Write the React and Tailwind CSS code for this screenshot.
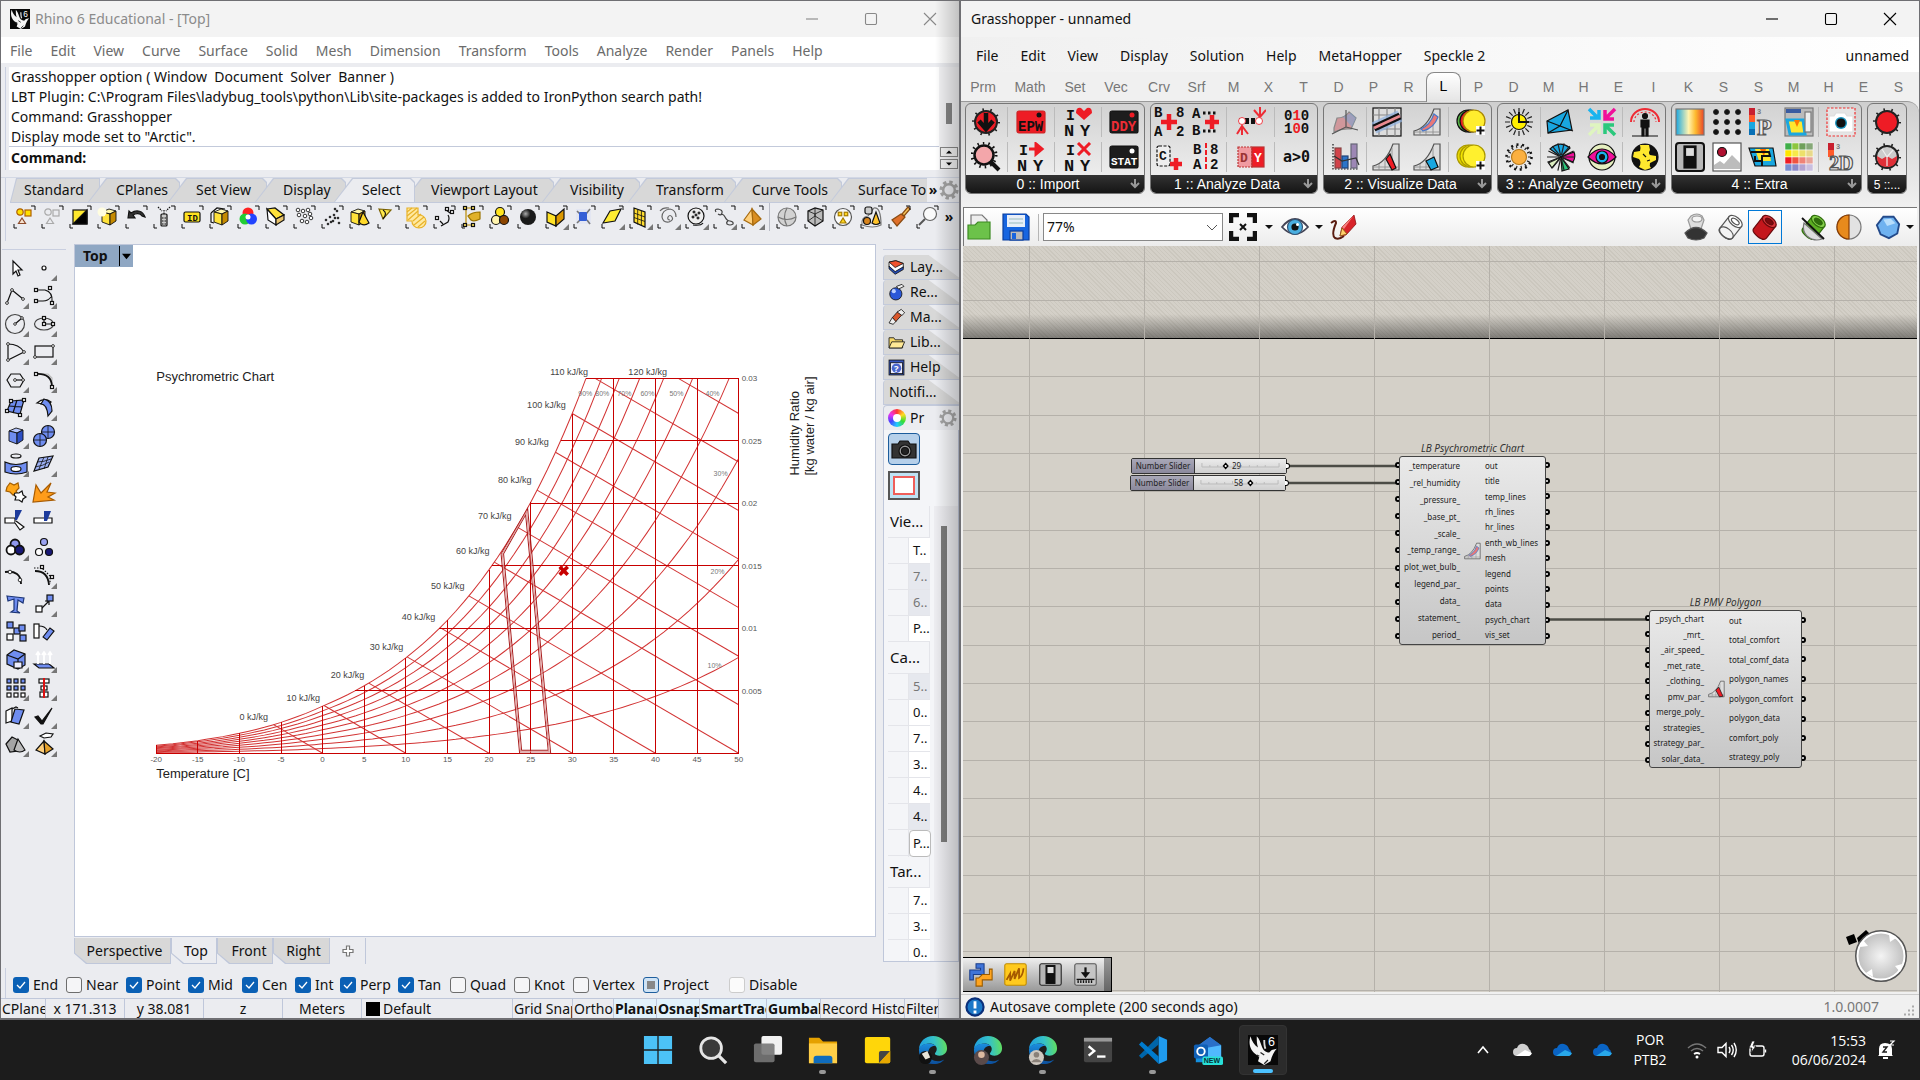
import React from "react";

/* ---------- shared helpers ---------- */

const Svg = ({ size = "size-7", box = "0 0 28 28", children }) => (
  <svg viewBox={box} className={`${size} block shrink-0`} fill="none" stroke="#111" strokeWidth="1.2" aria-hidden="true">
    {children}
  </svg>
);

const WindowButtons = ({ color }) => (
  <div className={`flex items-center ${color}`}>
    {[
      ["Minimize", "M1 7h12"],
      ["Maximize", "M1.5 3a1.5 1.5 0 0 1 1.5-1.5h8a1.5 1.5 0 0 1 1.5 1.5v8a1.5 1.5 0 0 1-1.5 1.5h-8a1.5 1.5 0 0 1-1.5-1.5z"],
      ["Close", "M1 1l12 12M13 1L1 13"],
    ].map(([label, d]) => (
      <button key={label} aria-label={label} className="flex h-9 w-[59px] items-center justify-center">
        <svg viewBox="0 0 14 14" className="size-3.5" fill="none" stroke="currentColor" strokeWidth="1.1">
          <path d={d} />
        </svg>
      </button>
    ))}
  </div>
);

const RhinoLogo = ({ size }) => (
  <svg viewBox="0 0 24 24" className={`${size} block`} aria-hidden="true">
    <rect width="24" height="24" fill="#080808" />
    <path d="M2 1C0 7 2 13 7 16l2 2-1 3 5 3 5-3c1-4 3-8 5-10l-4 1-2 2c-3 0-5-2-6-5C10 6 9 3 7 1c0 4 0 6 1 9C5 8 3 5 2 1z" fill="#f4f4f4" />
    <path d="M10 14l3 2M13 23l3-3M7 16l2 1" stroke="#222" fill="none" />
    <path d="M13 4c0 3 0 5 1 7" stroke="#ddd" strokeWidth="1.5" fill="none" />
    <text x="16" y="9" fontSize="10" fill="#fff" fontFamily="Liberation Sans, sans-serif">6</text>
  </svg>
);

/* ---------- Rhino icons ---------- */

const Cube = ({ a = "#ffe23a", b = "#fff7a8", c = "#c58a00", x = 0, y = 0 }) => (
  <g transform={`translate(${x} ${y})`} strokeWidth=".9">
    <path d="M7 9l7-3 7 2-6 3z" fill={b} />
    <path d="M7 9l8 2v11l-8-3z" fill={a} />
    <path d="M15 11l6-3v10l-6 4z" fill={c} />
  </g>
);

const dots = (pts, r, fill, stroke = "#222") => pts.map(([x, y], i) => <circle key={i} cx={x} cy={y} r={r} fill={fill} stroke={stroke} strokeWidth=".9" />);
const squares = (pts, s = 3, fill = "#fff") => pts.map(([x, y], i) => <rect key={i} x={x - s / 2} y={y - s / 2} width={s} height={s} fill={fill} />);

const selectIcons = [
  <><circle cx="10" cy="9" r="3.2" fill="#ffe000" stroke="#b06000" /><rect x="15" y="7" width="6" height="6" fill="#ffe000" stroke="#b06000" /><path d="M12 15l-3.500 5.500h7z" fill="#f7e2cf" stroke="#8c4a2a" /></>,
  <g stroke="#aaa"><circle cx="10" cy="9" r="3.200" /><rect x="15" y="7" width="6" height="6" /><path d="M12 15l-3.500 5.500h7z" /></g>,
  <><rect x="7" y="7" width="14" height="14" fill="#ffe92e" /><path d="M21 7v14H7z" fill="#000" /></>,
  <><Cube x={1} /><circle cx="8" cy="9" r="4.500" fill="#fffde0" stroke="none" /></>,
  <path d="M6 15l1-7 2 2c6-4 12-2 14 4l-3-1c-2-3-6-3-9-1l2 3z" fill="#333" />,
  <><rect x="11" y="11" width="6" height="12" rx="1" fill="#c9c9c9" /><path d="M14 7v4M8 4l4 4M20 4l-4 4M12 15h4M12 18h4M12 21h4" strokeDasharray="1.500 1" /></>,
  <><rect x="6" y="9" width="16" height="10" rx="1.500" fill="#ffe21f" /><text x="9" y="17.500" fontSize="9" fontWeight="bold" stroke="none" fill="#111" fontFamily="Liberation Mono, monospace">ID</text></>,
  <><path d="M5 10l6-5 8 1M5 10v9l3 1" fill="#fff" /><Cube x={1} /></>,
  <g stroke="none"><circle cx="14" cy="10" r="5.500" fill="#f22" /><circle cx="11" cy="16" r="5.500" fill="#2c3" /><circle cx="17.500" cy="16" r="5.500" fill="#24f" /><circle cx="14" cy="14" r="2.500" fill="#fff" /></g>,
  <><path d="M5 6l8-1 9 7-8 4z" fill="#ffe13a" /><path d="M5 6l9 10v6l-8-5z" fill="#fff" /><path d="M14 16l8-4v5l-8 5z" fill="#e8c36b" /></>,
  dots([[8, 7], [13, 8], [9, 12], [15, 13], [20, 11], [12, 18], [17, 19], [21, 15], [18, 7]], 1.8, "#fff"),
  dots([[17, 6], [8, 17], [12, 14], [16, 12], [20, 15], [10, 21], [15, 18], [21, 20], [17, 15], [13, 19], [19, 8]], 0.9, "#000"),
  <><Cube x={-2} /><path d="M17 9l-4 10q4 5 10 1z" fill="#ffd92a" /></>,
  <><path d="M5 6l12 1-8 9z" fill="#ffe94a" stroke="#7a6000" /><path d="M9 7q5 3 0 9" /></>,
  <g stroke="#e8b229"><path d="M5 5h11v7a7 6.500 0 1 1-6 6H5z" fill="#ffe9a0" /><path d="M5 9l5-4M5 13l10-8M6 17L16 8M11 18l8-7M12 22l10-8M16 24l7-6" /></g>,
  <><path d="M15 6l5 4M18 12q2 3 0 7l-7 4M10 18l3 3" />{squares([[17, 6], [7, 15], [22, 9]])}</>,
  <><path d="M8 5v17M5 5h9M5 22h9" stroke="#b98a00" />{squares([[7, 5], [7, 22], [15, 5], [15, 22]], 3, "#ffe25a")}<path d="M10 13q4-4 12-4v7q-6 3-9 1z" fill="#e0b12a" stroke="#9b7400" /></>,
  <><circle cx="14" cy="9" r="4.500" fill="#ffe41f" /><circle cx="10" cy="17" r="4.500" fill="#fff4ae" /><circle cx="18" cy="17" r="4.500" fill="#8c4500" /></>,
  <><defs><radialGradient id="ball" cx=".35" cy=".3"><stop stopColor="#aaa" /><stop offset=".6" stopColor="#1a1a1a" /></radialGradient></defs><circle cx="14" cy="14" r="8" fill="url(#ball)" stroke="none" /></>,
  <><path d="M5 9l9 4v10l-9-4z" fill="#ffe226" /><path d="M14 13l8-7v10l-8 7z" fill="#dc9800" /></>,
  <><rect x="6" y="6" width="15" height="15" fill="#e3e6f2" stroke="none" /><path d="M7 20l4-4M16 11l4-5M7 8l3 3M17 17l3 4" strokeWidth="1.600" stroke="#777" /><rect x="9" y="9" width="8" height="9" rx="1" fill="#355fd6" stroke="none" /></>,
  <path d="M5 20l7-12 11-2-6 12z" fill="#ffec31" />,
  <><path d="M8 5l11 4v15L8 19z" fill="#ffdc2e" /><path d="M11.700 6.500v15M15.400 8v15M8 10l11 4M8 14.500l11 4" strokeWidth=".8" /></>,
  <path d="M14 14q2-3 4 0t-3 5q-6 1-7-5 0-7 8-8 6 1 6 8M14 14q-1 3 2 3M6 8q3-4 9-3" stroke="#666" />,
  <><circle cx="14" cy="13" r="8" fill="#eee" />{dots([[12, 9], [17, 10], [11, 14], [16, 15], [14, 12]], 1.100, "#111")}<path d="M11 22q8 1 10-2" /></>,
  <path d="M6 9q-2-3 2-3 5 1 4 4t-4 1M10 12q3-2 5 2t5 4q4 1 3 3-3 2-6 0-1-2 1-3" stroke="#444" />,
  <><path d="M14 6L6 17l9 5z" fill="#ffcf7a" stroke="#a66a10" /><path d="M14 6l9 10-8 6z" fill="#d98e22" stroke="#a66a10" /></>,
  "sep",
  <><circle cx="14" cy="14" r="9" fill="#d2d2d2" stroke="#777" /><path d="M14 5q-5 9 0 18M5 14q9 5 18 0" stroke="#777" /></>,
  <><path d="M7 8l7-3 8 2v11l-8 5-7-5z" fill="#bbb" /><path d="M14 11v12M7 8l7 3 8-4M14 5v8l-7 5M14 13l8 5" strokeWidth=".8" /></>,
  <><circle cx="14" cy="14" r="8.500" stroke="#555" fill="#fafafa" /><g stroke="#a67c00">{squares([[11, 11], [17, 11]], 3.500, "#ffd61f")}</g><path d="M14 15l-3 5h6z" fill="#ffd61f" stroke="#a67c00" /></>,
  <><path d="M17 5q7-1 7 17-8 4-19 0-1-8 6-9z" stroke="#777" /><rect x="8" y="4" width="7" height="7" rx="2" fill="#ccc" /><path d="M19 9l-4 11q4 3 8 0z" fill="#ffc32a" /><circle cx="10" cy="18" r="3.500" fill="#d8841c" /></>,
  <><path d="M23 4l-6 7 2 2 6-7z" fill="#f3c35a" stroke="#8a4b12" /><path d="M16 11l-9 6 5 6 8-9z" fill="#e0702a" stroke="#8a4b12" /></>,
  <><circle cx="17" cy="11" r="6.500" fill="#fafafa" stroke="#666" /><path d="M12 16l-6 6" stroke="#555" strokeWidth="2" /></>,
];
const flyout = [19, 21, 22, 23, 24, 25, 26];

const blue = "#6f8df0";
const sideIcons = [
  <path d="M11 7v13l3-3 2 5 2-1-2-5h4z" fill="#fff" />,
  <circle cx="14" cy="14" r="2" fill="#fff" />,
  <><path d="M5 21l5-13 11 9" />{dots([[5, 21], [10, 8], [21, 17]], 1.400, "#fff")}</>,
  <><path d="M6 8h9q8 2 7 12M6 19h7q5 0 8-4" />{squares([[6, 8], [6, 19], [20, 6], [22, 21]])}</>,
  <><circle cx="13" cy="14" r="9.500" stroke="#444" /><path d="M13 14l7-6" />{dots([[13, 14], [20, 8]], 1.300, "#fff")}</>,
  <><ellipse cx="14" cy="14" rx="9.500" ry="6" stroke="#444" /><path d="M14 8v6h9" />{squares([[14, 8], [14, 14], [23, 14]])}</>,
  <><path d="M6 6q11 0 16 8L6 22z" />{dots([[6, 6], [22, 14], [6, 22]], 1.400, "#fff")}</>,
  <><rect x="5" y="8" width="18" height="11" />{dots([[23, 8], [5, 19]], 1.400, "#fff")}</>,
  <><path d="M9 8h9l4 6-4 7H9l-4-7z" /><path d="M13 14h9" />{dots([[13, 14], [21, 14]], 1.400, "#fff")}</>,
  <><path d="M6 8h12l4 4v9" stroke="#bbb" /><path d="M6 8q16-1 16 13" strokeWidth="1.800" />{squares([[6, 8], [22, 21]])}</>,
  <><path d="M9 7l13-1-4 14-13-3z" fill={blue} /><path d="M15 6l-4 13M7 12l13 1" />{squares([[9, 7], [22, 6], [18, 21], [5, 17]])}</>,
  <><path d="M7 9q7-6 14-1l-5 4q-4-3-9-3z" fill="#fff" /><path d="M11 10q6 0 7 12l4-5q0-10-8-12z" fill={blue} /></>,
  <Cube a="#6f8df0" b="#b5c6ff" c="#2d4fc4" />,
  <><circle cx="18" cy="10" r="6.500" fill={blue} /><circle cx="10" cy="18" r="6.500" fill={blue} /><path d="M18 4v12M12 10h12M10 12v12M4 18h12" strokeWidth=".8" /></>,
  <><ellipse cx="14" cy="6" rx="5" ry="2" /><path d="M3 12q11 5 22 0v10q-11 4-22 0z" fill={blue} /><ellipse cx="14" cy="19" rx="5" ry="2.500" fill="#fff" /></>,
  <><path d="M9 8l14-2-5 11-14 4z" fill="#9db1f5" /><path d="M7 12q7 0 14-3M5 17q8-1 14-5M14 7l-5 12M18 7l-4 12" strokeWidth=".8" /></>,
  <><path d="M5 9l3-4 4 2 4-2 1 5-3 3 2 3-5 1-3-3-4-1z" fill="#ffa71a" stroke="#a45f00" /><path d="M13 15l4 0 3-2 1 4 3 2-3 2-1 3-3-2-4 0 1-3-2-2z" fill="#fff" /></>,
  <path d="M3 24L6 7l5 8 10-10-4 9 8 1-7 4 6 3z" fill="#ff9c1a" stroke="#a85b00" />,
  <><path d="M3 12h10v5H3z" fill="#fff" /><path d="M13 4h7l-5 10h-2z" fill="#1d3b9c" stroke="none" /><path d="M14 15l8 6-4 3-5-7" fill="#fff" /></>,
  <><path d="M4 12h18v5H4z" fill="#fff" /><path d="M14 5h7l-4 10h-3z" fill="#1d3b9c" stroke="none" /></>,
  <g strokeWidth="1.800"><circle cx="13" cy="10" r="4.500" fill="#8f97ee" /><circle cx="9" cy="16" r="4.500" fill="#fff" /><circle cx="17.500" cy="16" r="4.500" fill="#181876" /></g>,
  <><circle cx="14" cy="8" r="3.500" fill="#9aa2f0" /><circle cx="9" cy="18" r="3.500" fill="#fff" /><circle cx="19" cy="18" r="3.500" fill="#181876" /></>,
  <><path d="M3 10q16-2 16 12" strokeWidth="1.800" />{dots([[8, 10], [18, 18]], 1.800, "#fff")}</>,
  <><path d="M5 9q13 0 14 14" strokeWidth="1.800" /><path d="M4 6h8l8 8v8" strokeDasharray="1.500 1.500" />{squares([[12, 5], [22, 15]])}</>,
  <path d="M5 6l17 2-1 5-5-3-1 11 3 2-9-1 3-2 0-11-6 2z" fill={blue} stroke="#1c3576" />,
  <><path d="M11 19l8-8m-4 0h4v4" /><rect x="6" y="16" width="6" height="6" fill="#fff" /><rect x="17" y="5" width="6" height="6" fill={blue} /></>,
  <>{squares([[8, 7], [15, 13], [20, 10], [21, 20]], 6, blue)}{squares([[8, 19]], 6)}</>,
  <><rect x="4" y="6" width="5" height="14" fill="#fff" /><path d="M9 8q6 0 8 4" /><path d="M13 19l7-9 4 3-7 9z" fill={blue} /></>,
  <><path d="M5 9l7-5 11 4v11l-7 4-11-5z" fill={blue} /><path d="M5 9l11 4 7-5M16 13v10" /><path d="M12 16h8v6h-8z" fill="#eef" /></>,
  <><path d="M4 18h15l5 4H9z" fill={blue} /><path d="M8 18V7M14 18V7M20 18V7M6 9l2-3 2 3M12 9l2-3 2 3M18 9l2-3 2 3" stroke="#fff" strokeWidth="1.800" /></>,
  <>{squares([[7, 7], [14, 7], [21, 7], [7, 14], [14, 14], [21, 14]], 4, blue)}{squares([[7, 21], [14, 21], [21, 21]], 4)}</>,
  <><rect x="9" y="5" width="10" height="4" fill="#fff" /><rect x="11" y="12" width="6" height="4" fill="#fff" /><rect x="10" y="18" width="8" height="5" fill="#fff" /><path d="M14 4v20" stroke="#d11" strokeWidth="2" /></>,
  <><path d="M4 9l6-3v13l-6 2z" fill="#fff" /><path d="M13 7l9 1-5 14-8-2z" fill={blue} /><path d="M10 7l4-2 2 1" fill="#ddd" /></>,
  <path d="M5 15l3-1 4 5L22 6 13 22h-2z" fill="#111" />,
  <><path d="M4 14l6-7 6 3v11l-8 1z" fill="#a4a4a4" /><path d="M16 9l-4 11q6 4 11 0z" fill="#bbb" /></>,
  <><path d="M14 11L6 20l9 4z" fill="#ffcf7a" /><path d="M14 11l9 8-8 5z" fill="#e5a12b" /><path d="M10 6l6-3 7 1-2 3-7 1z" fill="#fff" /></>,
];
const noFly = [0, 16, 17, 18, 19, 21, 22, 24, 26, 27];

const FlyMark = () => <path d="M27 21v6h-6z" fill="#777" stroke="none" />;

/* ---------- psychrometric chart ---------- */

const X = (t) => 738 - (50 - t) * 8.3;
const Y = (hr) => 752 - hr * 12467;
const humidity = (t, rh) => {
  const p = t < 0 ? 0.61078 * Math.exp((21.875 * t) / (t + 265.5)) : 0.61078 * Math.exp((17.27 * t) / (t + 237.3));
  return (0.622 * p * rh) / (101.325 - p * rh);
};
const satTemp = (test) => {
  let lo = -20, hi = 50;
  for (let i = 0; i < 40; i++) {
    const m = (lo + hi) / 2;
    if (test(m)) hi = m; else lo = m;
  }
  return lo;
};
const rhPath = (rh) => {
  const end = Math.min(50, satTemp((t) => humidity(t, rh) > 0.03));
  const pts = [];
  for (let t = -20; t < end; t += 1) pts.push(t);
  pts.push(end);
  return pts.map((t, i) => `${i ? "L" : "M"}${X(t).toFixed(1)} ${Y(humidity(t, rh)).toFixed(1)}`).join("");
};
const enthPath = (h) => {
  const k = 2575;
  let t0 = satTemp((t) => t + k * humidity(t, 1) > h);
  let w0 = (h - t0) / k;
  if (w0 > 0.03) { w0 = 0.03; t0 = h - k * w0; }
  const t1 = Math.min(50, h);
  return `M${X(t0)} ${Y(w0)}L${X(t1)} ${Y((h - t1) / k)}`;
};
const tens = (a, b, s) => Array.from({ length: Math.round((b - a) / s) + 1 }, (_, i) => a + i * s);

const kj = [[240, 719, 0], [287, 700, 10], [331, 677, 20], [370, 649, 30], [402, 619, 40], [431, 588, 50], [456, 553, 60], [478, 518, 70], [498, 482, 80], [515, 445, 90], [527, 408, 100], [550, 375, 110], [628, 375, 120]];
const pct = [[578, 396, 90], [595, 396, 80], [617, 396, 70], [640, 396, 60], [669, 396, 50], [705, 396, 40], [713, 475, 30], [710, 573, 20], [707, 667, 10]];

const Chart = () => (
  <svg viewBox="76 245 798 691" preserveAspectRatio="xMinYMin slice" className="block h-full w-full" fontFamily="Liberation Sans, Arial, sans-serif" role="img" aria-label="Psychrometric Chart">
    <g stroke="#c80000" fill="none">
      <g shapeRendering="crispEdges">
        {tens(-20, 50, 5).map((t) => <path key={t} d={`M${X(t)} ${Y(0)}V${Y(Math.min(0.03, humidity(t, 1)))}`} />)}
        {tens(0, 6, 1).map((n) => {
          const t = n === 0 ? -20 : satTemp((v) => humidity(v, 1) > n * 0.005);
          return <path key={n} d={`M${X(t)} ${Y(n * 0.005)}H738`} />;
        })}
      </g>
      <g strokeWidth="1" opacity=".8">
        {tens(10, 100, 10).map((r) => <path key={r} d={rhPath(r / 100)} />)}
        {tens(0, 120, 10).map((h) => <path key={h} d={enthPath(h)} />)}
      </g>
      <g stroke="#a81d1d" strokeWidth="1">
        <path d="M501 553L519.500 752H550.500L527.500 508z" />
        <path d="M503.500 553L521.500 749H548L525.500 514z" />
        <path d="M502.200 553L520.500 750.500H549L526.500 511z" stroke="#d99" />
      </g>
      <path d="M559.500 566l8 8M567.500 566l-8 8" strokeWidth="3.600" />
    </g>
    <g fill="#444" fontSize="8">
      {kj.map(([x, y, v]) => <text key={v} x={x} y={y} fontSize="9">{v} kJ/kg</text>)}
      <g fill="#555">
        {tens(-20, 50, 5).map((t) => <text key={t} x={X(t)} y="761" textAnchor="middle">{t}</text>)}
        {["0.005", "0.01", "0.015", "0.02", "0.025", "0.03"].map((v) => <text key={v} x="741" y={Y(+v) + 3}>{v}</text>)}
      </g>
      <g fill="#777" fontSize="7">{pct.map(([x, y, v]) => <text key={v} x={x} y={y}>{v}%</text>)}</g>
    </g>
    <g fill="#222" fontSize="13">
      <text x="157" y="381">Psychrometric Chart</text>
      <text x="157" y="777">Temperature [C]</text>
      <text transform="translate(798 475) rotate(-90)">Humidity Ratio</text>
      <text transform="translate(813 475) rotate(-90)" fontSize="13">[kg water / kg air]</text>
    </g>
  </svg>
);

/* ---------- Rhino window ---------- */

const Tab = ({ label, active, first }) => (
  <button className={`relative -mr-3 h-6 bg-[#c3cadb] p-px pb-0 text-left ${active ? "z-10" : ""} ${first ? "[clip-path:polygon(6px_0,100%_0,100%_100%,0_100%)]" : "[clip-path:polygon(18px_0,calc(100%-4px)_0,100%_4px,100%_100%,0_100%)]"}`}>
    <span className={`block h-full whitespace-nowrap leading-[22px] ${first ? "pl-[13px] [clip-path:polygon(6px_0,100%_0,100%_100%,0_100%)]" : "pl-[27px] [clip-path:polygon(18px_0,calc(100%-4px)_0,100%_4px,100%_100%,0_100%)]"} ${active ? "bg-[#ebecf0]" : "bg-[#d8d8d8]"}`}>{label}</span>
  </button>
);

const ViewTab = ({ label, active, width }) => (
  <button className={`h-[26px] ${width} bg-[#bfc7da] p-px pt-0 [clip-path:polygon(0_0,100%_0,100%_100%,12px_100%,0_60%)]`}>
    <span className={`block h-full leading-[26px] [clip-path:polygon(0_0,100%_0,100%_100%,12px_100%,0_60%)] ${active ? "bg-[#ebecf0]" : "bg-[#d8d8d8]"}`}>{label}</span>
  </button>
);

const panelTabs = [
  ["Lay...", <><path d="M3 6l10-2 11 4v6l-12 7-9-8z" fill="#fff" /><path d="M3 6l10-2 11 4-12 6z" fill="#f0522c" /><path d="M3 12l9 8 12-7v4l-12 7-9-8z" fill="#234bb5" /></>],
  ["Re...", <><circle cx="13" cy="16" r="9" fill="#2b58d8" /><circle cx="10" cy="12" r="3" fill="#bcd0ff" stroke="none" /><path d="M14 5l8-3 3 3-8 4z" fill="#eee" /></>],
  ["Ma...", <><path d="M3 22l5-8 6 5-5 5z" fill="#eee" /><path d="M8 14l8-9 6 5-9 10z" fill="#d9572c" /><path d="M15 6l6-4 5 5-4 4z" fill="#eee" /></>],
  ["Lib...", <><path d="M3 22V7h7l2 3h11v12z" fill="#f7d869" /><path d="M3 22l4-9h19l-4 9z" fill="#ffe996" /></>],
  ["Help", <><rect x="3" y="3" width="22" height="22" fill="#3454c0" /><rect x="5" y="7" width="18" height="16" fill="#eef" /><circle cx="14" cy="15" r="7" fill="#4a66cc" stroke="none" /><text x="10.500" y="20" fontSize="14" fontWeight="bold" fill="#fff" stroke="none">?</text></>],
  ["Notifi...", null],
];

const props = [
  ["h", "Vie..."], ["w", "T.."], ["g", "7.."], ["g", "6.."], ["w", "P..."],
  ["h", "Ca..."], ["g", "5.."], ["w", "0.."], ["w", "7.."], ["w", "3.."], ["w", "4.."], ["d", "4.."], ["b", "P..."],
  ["h", "Tar..."], ["w", "7.."], ["w", "3.."], ["w", "0.."],
];

const Gear = ({ size }) => (
  <Svg size={size} box="0 0 24 24">
    <circle cx="12" cy="12" r="7" stroke="#a4a4a4" strokeWidth="3" />
    <circle cx="12" cy="12" r="9.500" stroke="#a4a4a4" strokeWidth="4" strokeDasharray="4 3.460" />
  </Svg>
);

const PropertiesPanel = () => (
  <aside className="mb-0.5 mt-2 flex w-[76px] shrink-0 flex-col border-t border-[#c9cfe0] pt-[5px]">
    {panelTabs.map(([label, icon]) => (
      <button key={label} className="flex h-[25px] shrink-0 items-center gap-1 rounded-tl border-b border-l border-[#c3cadb] bg-[#d8d8d8] pl-[3px] text-left [clip-path:polygon(0_0,60%_0,100%_90%,100%_100%,0_100%)]">
        {icon && <Svg size="size-[19px]">{icon}</Svg>}
        <span className={icon ? "" : "pl-0.5"}>{label}</span>
      </button>
    ))}
    <div className="flex h-[25px] shrink-0 items-center gap-1 rounded-tl border-l border-t border-[#c3cadb] pl-1">
      <span className="size-[18px] rounded-full bg-[conic-gradient(#f33,#fd2,#3d3,#2cf,#44f,#e3e,#f33)] p-[5px]"><span className="block size-2 rounded-full bg-white" /></span>
      Pr
      <span className="ml-auto mr-0.5"><Gear size="size-[18px]" /></span>
    </div>
    <div className="flex min-h-0 flex-1 flex-col border-x border-b border-[#bfc7da] bg-[#f4f5f8]">
      <div className="flex flex-col gap-1.5 px-1 pb-1.5 pt-[3px]">
        <button aria-label="Viewport properties" className="flex h-8 w-8 items-center justify-center rounded border border-[#1c5c9c] bg-[#b6d0ea]">
          <Svg size="size-7"><path d="M2 9h6l2-3h8l2 3h6v14H2z" fill="#333" /><circle cx="15" cy="16" r="6" fill="#999" /><circle cx="15" cy="16" r="3.500" fill="#222" /></Svg>
        </button>
        <button aria-label="Frame" className="h-[29px] w-8 border-2 border-[#555] bg-[#bfe3f4] p-[3px]"><span className="block h-full border-2 border-[#ef5f5a] bg-white" /></button>
      </div>
      <div className="flex min-h-0 flex-1 overflow-hidden">
        <div className="w-[46px] pl-1 text-[13px]">
          {props.map(([kind, label], i) =>
            kind === "h" ? (
              <div key={i} className="h-8 whitespace-nowrap border-b border-r border-[#e4e5ea] pl-0.5 text-[15px] leading-[31px]">{label}</div>
            ) : (
              <div key={i} className="grid h-[26px] grid-cols-[21px_1fr] border-b border-[#e4e5ea]">
                <span className="border-r border-[#e4e5ea]" />
                <span className={`leading-[25px] ${kind === "b" ? "rounded border border-[#bbb] bg-white pl-[3px]" : "pl-1"} ${kind === "g" ? "bg-[#e6e8ee] text-[#777]" : kind === "d" ? "bg-[#e6e8ee]" : "bg-white"}`}>{label}</span>
              </div>
            )
          )}
        </div>
        <div className="ml-1 flex-1 bg-[#ececf0] pl-[7px] pt-5">
          <div className="h-[316px] w-1.5 bg-[#7c7c7c]" />
        </div>
      </div>
    </div>
  </aside>
);

const snaps = [["End", 1], ["Near", 0], ["Point", 1], ["Mid", 1], ["Cen", 1], ["Int", 1], ["Perp", 1], ["Tan", 1], ["Quad", 0], ["Knot", 0], ["Vertex", 0], ["Project", 2], ["Disable", 3]];
const snapBox = [
  "border border-[#6d6d6d] bg-[#f5f5f7]",
  "bg-[#0a60b5]",
  "border border-[#1f5f9e] bg-[#cfe3f5]",
  "border border-[#ccc] bg-[#fbfbfb]",
];

const RhinoWindow = () => (
  <section className="relative flex min-w-0 flex-col overflow-hidden border border-b-2 border-[#6f6f73] bg-[#ebecf0]">
    <header className="flex h-9 shrink-0 items-center bg-[#f3f3f3] pl-[9px] text-[#8b8b8b]">
      <RhinoLogo size="size-5" />
      <h1 className="flex-1 pl-[5px]">Rhino 6 Educational - [Top]</h1>
      <WindowButtons color="text-[#888]" />
    </header>
    <nav className="flex h-[26px] shrink-0 items-center gap-[18px] bg-white pl-[9px] pt-0.5 text-[#6b6b6b]">
      {["File", "Edit", "View", "Curve", "Surface", "Solid", "Mesh", "Dimension", "Transform", "Tools", "Analyze", "Render", "Panels", "Help"].map((m) => <button key={m}>{m}</button>)}
    </nav>

    <div className="ml-1 mt-1 flex shrink-0 border-l border-[#c9cfe0] pl-[3px]">
      <div className="min-w-0 flex-1 bg-white">
        <div className="h-20 whitespace-pre border-b border-[#c3cadb] pl-0.5 leading-5">
          {"Grasshopper option ( Window  Document  Solver  Banner )\nLBT Plugin: C:\\Program Files\\ladybug_tools\\python\\Lib\\site-packages is added to IronPython search path!\nCommand: Grasshopper\nDisplay mode set to \"Arctic\"."}
        </div>
        <label className="flex h-[23px] items-center pb-0.5 pl-0.5 font-bold">Command:<input className="flex-1 outline-none" /></label>
      </div>
      <div className="flex w-5 flex-col items-center bg-[#f2f2f4]">
        <div className="mt-9 h-[21px] w-1.5 bg-[#858585]" />
        <div className="mt-auto flex flex-col gap-0.5 pb-px text-[7px] leading-none">
          <button aria-label="Up" className="flex h-2.5 w-[18px] items-center justify-center border border-[#888] bg-[#f3f3f3]"><Svg size="size-1.5" box="0 0 8 8"><path d="M0 6l4-4 4 4z" fill="#000" stroke="none" /></Svg></button>
          <button aria-label="Down" className="flex h-2.5 w-[18px] items-center justify-center border border-[#888] bg-[#f3f3f3]"><Svg size="size-1.5" box="0 0 8 8"><path d="M0 2l4 4 4-4z" fill="#000" stroke="none" /></Svg></button>
        </div>
      </div>
    </div>

    <div className="mt-[7px] h-px shrink-0 bg-[#d3d8e4]" />
    <div className="ml-1 shrink-0 border-l border-[#c9cfe0] pl-1">
      <div className="flex items-center border-b border-[#c3cadb]">
        <div className="grid h-6 flex-1 grid-cols-[78px_80px_87px_79px_69px_139px_86px_96px_106px_1fr] overflow-hidden">
          {["Standard", "CPlanes", "Set View", "Display", "Select", "Viewport Layout", "Visibility", "Transform", "Curve Tools", "Surface To"].map((t, i) => <Tab key={t} label={t} active={t === "Select"} first={i === 0} />)}
        </div>
        <button className="w-3 font-bold">»</button>
        <Gear size="size-5" />
      </div>
      <div className="flex h-[38px] items-start">
        {selectIcons.map((ic, i) =>
          ic === "sep" ? (
            <span key={i} className="mx-[3px] h-7 w-px bg-[#b9bcc6]" />
          ) : (
            <button key={i} aria-label={`Select tool ${i + 1}`}>
              <Svg>
                {ic}
                <path d="M4 21v4h3M21 3h4v4" strokeWidth="1" />
                {flyout.includes(i) && <FlyMark />}
              </Svg>
            </button>
          )
        )}
        <button className="w-4 pt-1 text-center font-bold">»</button>
      </div>
    </div>

    <div className="flex min-h-0 flex-1">
      <div className="w-[73px] shrink-0 pl-px pt-2">
        <div className="mb-1 h-px w-16 bg-[#c9cfe0]" />
        <div className="grid w-14 grid-cols-2">
          {sideIcons.map((ic, i) => (
            <button key={i} aria-label={`Tool ${i + 1}`}>
              <Svg>{ic}{!noFly.includes(i) && <FlyMark />}</Svg>
            </button>
          ))}
        </div>
      </div>
      <div className="flex min-w-0 flex-1 flex-col pt-[3px]">
        <div className="relative min-h-0 flex-1 border border-[#bfc7da] bg-white">
          <Chart />
          <button className="absolute left-0 top-0 flex h-[22px] w-[58px] items-center bg-[#8fa7c3] pl-2 font-bold">
            Top
            <span className="ml-auto flex h-5 w-[14px] items-center justify-center border-l border-black"><Svg size="size-[9px]" box="0 0 10 10"><path d="M0 2h10l-5 6z" fill="#000" stroke="none" /></Svg></span>
          </button>
        </div>
        <div className="mt-px flex h-[26px] shrink-0">
          <ViewTab label="Perspective" width="w-[97px] [&>span]:pl-1" />
          <ViewTab label="Top" active width="w-[46px] [&>span]:pl-1" />
          <ViewTab label="Front" width="w-[56px] [&>span]:pl-2" />
          <ViewTab label="Right" width="w-[57px] [&>span]:pl-1" />
          <button aria-label="New viewport" className="flex w-9 items-center justify-center border-r border-[#bfc7da]">
            <Svg size="size-3" box="0 0 12 12"><path d="M4.500 1h3v3.500H11v3H7.500V11h-3V7.500H1v-3h3.500z" fill="#fff" stroke="#777" /></Svg>
          </button>
        </div>
      </div>
      <div className="w-[7px] shrink-0" />
      <PropertiesPanel />
    </div>

    <div role="group" aria-label="Object snaps" className="ml-1 mt-1 grid h-[30px] shrink-0 grid-cols-[53px_60px_62px_54px_53px_45px_58px_52px_64px_59px_70px_86px_1fr] content-center border-l border-[#c9cfe0] pl-[7px] pt-1">
      {snaps.map(([label, kind]) => (
        <label key={label} className="flex items-center gap-1">
          <span className="relative flex size-4">
            <input type="checkbox" defaultChecked={kind === 1} className={`size-4 appearance-none rounded-[3px] ${snapBox[kind]}`} />
            {kind === 1 && <svg viewBox="0 0 16 16" className="pointer-events-none absolute inset-0" fill="none" stroke="#fff" strokeWidth="1.300"><path d="M4 8l3 3 5-6" /></svg>}
            {kind === 2 && <span className="pointer-events-none absolute inset-1 bg-[#888]" />}
          </span>
          {label}
        </label>
      ))}
    </div>
    <footer className="grid h-5 shrink-0 grid-cols-[45px_79px_79px_79px_79px_151px_60px_41px_43px_43px_67px_54px_84px_34px_1fr] border-t border-[#bfc7da] leading-5">
      {["CPlane", "x 171.313", "y 38.081", "z", "Meters", "#Default", "Grid Snap", "Ortho", "*Planar", "*Osnap", "*SmartTrack", "*Gumball", "Record History", "Filter"].map((s, i) => (
        <span key={s} className={`overflow-hidden whitespace-nowrap border-r border-[#bfc7da] ${s[0] === "*" ? "bg-[#e2f1fb] font-bold" : ""} ${i > 0 && i < 5 ? "text-center" : "pl-px"}`}>
          {s[0] === "#" ? <span className="flex items-center gap-[3px] pl-[3px]"><i className="size-3.5 bg-black" />Default</span> : s.replace("*", "")}
        </span>
      ))}
    </footer>
    <div className="pointer-events-none absolute inset-y-0 right-0 w-6 bg-linear-to-r from-transparent to-black/20" />
  </section>
);

/* ---------- Grasshopper icons ---------- */

const Txt = ({ x, y, s = 12, c = "#111", children, f = "Liberation Mono, monospace" }) => (
  <text x={x} y={y} fontSize={s} fontWeight="bold" fill={c} stroke="none" fontFamily={f}>{children}</text>
);
const Bug = ({ fill, inner }) => (
  <>
    <circle cx="15" cy="15" r="12.500" strokeDasharray="1.500 6.350" stroke="#222" strokeWidth="3" />
    <circle cx="15" cy="15" r="11" fill={fill} stroke="#222" strokeWidth="2" />
    {inner}
  </>
);
const NY = ({ children }) => <><Txt x={3} y={13} s={15}>I</Txt>{children}<Txt x={1} y={29} s={17}>N</Txt><Txt x={17} y={29} s={17}>Y</Txt></>;
const Plus = ({ x, y, r = 6 }) => <path d={`M${x - r} ${y}h${2 * r}M${x} ${y - r}v${2 * r}`} stroke="#ee1c25" strokeWidth="4.500" />;
const Psy = ({ mid }) => (
  <>
    <path d="M1 28v-4q13-3 20-22h6v26z" fill="#ddd" stroke="#555" />
    <path d="M7 28v-6M13 28v-11M1 25h26M20 28V6" stroke="#888" strokeWidth=".8" />
    {mid}
  </>
);
const Plus2 = () => <><rect x="20" y="19" width="9" height="9" fill="#fff" stroke="none" /><path d="M20.500 23.500h8M24.500 19.500v8" strokeWidth="2" /></>;
const rays = (n, r1, r2) => Array.from({ length: n }, (_, i) => {
  const a = (i / n) * Math.PI * 2;
  return <path key={i} d={`M${15 + r1 * Math.cos(a)} ${15 + r1 * Math.sin(a)}L${15 + r2 * Math.cos(a)} ${15 + r2 * Math.sin(a)}`} stroke="#222" />;
});
const Scale = () => <><rect x="2" y="1" width="6" height="7" fill="#c8202f" stroke="none" /><rect x="2" y="8" width="6" height="7" fill="#ff5a2a" stroke="none" /><Txt x={10} y={7} s={7} c="#777">3</Txt></>;
const HeatMap = () => <><path d="M2 6h24l3 18H8z" fill="#19a7e0" /><path d="M8 7h14l2 12H12z" fill="#ffe62e" stroke="none" /><path d="M13 7h6l-2 7z" fill="#f60" stroke="none" /></>;
const swatches = ["#3fae49", "#8dc63f", "#6fa05a", "#86a878", "#ffe600", "#f7e948", "#ede06a", "#e8d98b", "#ee1c25", "#f0533f", "#ef8377", "#e8a49a", "#7b8fd0", "#8d8ac8", "#b4a3d0", "#c9bfe0"];

const ribbon = [
  { title: "0 :: Import", grid: "grid-cols-[42px_47px_47px_44px]", seps: [1, 2, 3], icons: [
    <Bug fill="#ee1c25" inner={<path d="M15 6v15M8 14l7 8 7-8" strokeWidth="4.500" />} />,
    <><rect x="1" y="4" width="28" height="22" rx="2" fill="#ee1c25" stroke="#c22" /><circle cx="23" cy="8" r="2.500" fill="#111" stroke="none" /><Txt x={2} y={24} s={14}>EPW</Txt></>,
    <NY><path d="M21 13l-8-7q0-6 5-5l3 3 3-3q5-1 5 5z" fill="#ee1c25" stroke="none" /></NY>,
    <><rect x="1" y="4" width="28" height="22" rx="2" fill="#1d1d1d" /><circle cx="23" cy="8" r="2.500" fill="#ee1c25" stroke="none" /><Txt x={2} y={24} s={14} c="#ee2c35">DDY</Txt></>,
    <><circle cx="13" cy="13" r="12" strokeDasharray="1.500 4" strokeWidth="3" /><circle cx="13" cy="13" r="9.500" fill="#f3a6aa" strokeWidth="2.500" /><path d="M20 20l8 8" strokeWidth="4" /></>,
    <NY><path d="M13 7h10M20 2l6 5-6 5z" fill="#ee1c25" stroke="#ee1c25" strokeWidth="3" /></NY>,
    <NY><path d="M15 1l12 12M27 1L15 13" stroke="#ee1c25" strokeWidth="3" /></NY>,
    <><rect x="1" y="4" width="28" height="22" rx="2" fill="#1d1d1d" /><circle cx="23" cy="9" r="2.500" fill="#fff" stroke="none" /><Txt x={2} y={23} s={11} c="#fff">STAT</Txt></>,
  ] },
  { title: "1 :: Analyze Data", grid: "grid-cols-[38px_38px_48px_44px]", seps: [2, 3], icons: [
    <><Txt x={0} y={10} s={14}>B</Txt><Txt x={22} y={10} s={14}>8</Txt><Txt x={0} y={29} s={14}>A</Txt><Txt x={22} y={29} s={14}>2</Txt><Plus x={15} y={15} r={8} /></>,
    <><Txt x={0} y={11} s={14}>A</Txt><Txt x={0} y={28} s={14}>B</Txt><path d="M11 6h15M11 24h15" strokeDasharray="2.500 2.500" strokeWidth="3" /><Plus x={20} y={15} r={7} /></>,
    <><path d="M3 14h24" strokeWidth="6" strokeDasharray="4 2" /><path d="M24 0v10M18 3l6 7 6-7M6 28V19M1 27l5-8 6 8" stroke="#ee2c35" strokeWidth="2" />{dots([[6, 14], [23, 14]], 3.500, "#fff", "#ee2c35")}</>,
    <><Txt x={2} y={13} s={14}>0<tspan fill="#ee1c25">1</tspan>0</Txt><Txt x={2} y={26} s={14}>1<tspan fill="#ee1c25">0</tspan>0</Txt></>,
    <><rect x="3" y="4" width="13" height="20" rx="2" fill="#eee" strokeDasharray="3 1.500" /><Txt x={5} y={18} s={13}>C</Txt><Plus x={22} y={22} r={6} /></>,
    <><Txt x={1} y={12} s={14}>B</Txt><Txt x={18} y={12} s={14}>8</Txt><Txt x={1} y={27} s={14}>A</Txt><Txt x={18} y={27} s={14}>2</Txt><path d="M14 1v28" stroke="#ee1c25" strokeWidth="2" strokeDasharray="5 2" /></>,
    <><rect x="2" y="5" width="14" height="20" fill="#f09aa0" stroke="#b33" strokeDasharray="2 1" /><rect x="16" y="5" width="12" height="20" fill="#ee1c25" stroke="#b33" /><Txt x={4} y={20} s={13} c="#933">D</Txt><Txt x={18} y={20} s={13} c="#fff">Y</Txt></>,
    <Txt x={1} y={20} s={15} f="DejaVu Sans Mono, monospace">a&gt;0</Txt>,
  ] },
  { title: "2 :: Visualize Data", grid: "grid-cols-[43px_41px_41px_44px]", seps: [1, 3], icons: [
    <><path d="M4 21L7 11q8 0 12-6l7 6-5 11q-9-1-17 3z" fill="#d0979b" stroke="#888" /><path d="M13 10l8-4 5 5-4 9z" fill="#7fa3d0" opacity=".6" stroke="none" /><path d="M16 3v17L2 27M16 20l12 3" stroke="#555" /></>,
    <><rect x="1" y="1" width="28" height="28" fill="#ddd" /><path d="M7 1v28M15 1v28M23 1v28M1 8h28M1 22h28" stroke="#888" /><path d="M2 21L28 9" stroke="#8fb0e0" strokeWidth="12" opacity=".7" /><path d="M2 21L28 9" strokeWidth="7" /><path d="M2 21L28 9" stroke="#e98a90" strokeWidth="3" /></>,
    <Psy mid={<path d="M8 22q9-4 13-15l4 3q-4 11-15 14z" fill="#e87878" stroke="#4a78c8" />} />,
    <><circle cx="12" cy="14" r="11" fill="#57b347" /><circle cx="15" cy="14" r="11" fill="#ee1c25" /><circle cx="18" cy="14" r="11" fill="#ffed2e" stroke="#a80" /><Plus2 /></>,
    <><path d="M3 2v25h26" strokeDasharray="1.500 1.500" /><rect x="5" y="6" width="6" height="20" fill="#d2434a" stroke="#844" /><rect x="12" y="14" width="6" height="12" fill="#2b74c8" stroke="#247" /><rect x="21" y="2" width="6" height="24" fill="#9d87b5" stroke="#667" /><path d="M4 14l8 5 14-3 3 7" stroke="#333" /></>,
    <Psy mid={<path d="M14 17l4-5 6 14-4 2z" fill="#ee1c25" />} />,
    <Psy mid={<path d="M13 19l8-4 4 10-7 3z" fill="#19a7e0" />} />,
    <><circle cx="12" cy="14" r="11" fill="#e8d800" stroke="#a90" /><circle cx="15" cy="14" r="11" fill="#f4e600" stroke="#a90" /><circle cx="18" cy="14" r="11" fill="#fff02e" stroke="#a90" /><Plus2 /></>,
  ] },
  { title: "3 :: Analyze Geometry", grid: "grid-cols-[43px_41px_41px_44px]", seps: [1, 3], icons: [
    <>{rays(16, 9, 14)}<circle cx="15" cy="15" r="7.500" fill="#ffee00" /><path d="M15 5v10h10" strokeWidth="2" /></>,
    <><path d="M1 14L22 3l4 20-24 3z" fill="#19a7e0" /><path d="M1 14l13 5 8-16M2 26l12-7 13 5" /></>,
    <g strokeWidth="3.500"><path d="M2 2l9 9M3 11h9V3" stroke="#19b4ee" /><path d="M28 2l-9 9M18 3v9h9" stroke="#f0109a" /><path d="M2 28l9-9M3 18h9v9" stroke="#dff5c0" /><path d="M28 28l-9-9M18 27v-9h9" stroke="#2bc87c" /></g>,
    <><path d="M1 15a14 13 0 0 1 28 0" stroke="#ee2c35" strokeWidth="2" /><path d="M4 15a11 10 0 0 1 22 0" stroke="#ee2c35" strokeDasharray="2 2" /><circle cx="15" cy="9" r="2.500" fill="#111" /><path d="M11 13h8v7h-1v9h-2v-8h-2v8h-2v-9h-1z" fill="#111" /><path d="M2 29h26" /></>,
    <><circle cx="15" cy="15" r="12.500" strokeDasharray="2 3.600" strokeWidth="2.500" />{rays(14, 9, 12)}<circle cx="15" cy="15" r="7.500" fill="#fbb040" stroke="#b87a1a" /></>,
    <><path d="M15 15L4 7q10-9 20-1z" fill="#19a7e0" /><path d="M15 15l13-5q2 5-1 10z" fill="#f0109a" /><path d="M15 15l8 12-7 2z" fill="#2bc87c" /><path d="M15 15L2 20l4 6z" fill="#dceec0" />{rays(14, 2, 14)}</>,
    <><circle cx="15" cy="15" r="13" fill="#e6efc0" /><path d="M1 15q14-16 28 0-14 14-28 0z" fill="#f0109a" /><circle cx="15" cy="15" r="6" fill="#19b4ee" /><circle cx="15" cy="15" r="2.500" fill="#111" /></>,
    <><circle cx="15" cy="15" r="13" fill="#111" /><path d="M10 3h9l1 5q-2 3 0 5l6 1v4l-6 3q-1 3 1 5l-6 2-6-3q3-5 0-8l-6-2 1-5 6-1q1-3 0-6z" fill="#ffe82e" stroke="none" /><path d="M13 12l3 3M17 19l3-1" /></>,
  ] },
  { title: "4 :: Extra", grid: "grid-cols-[38px_35px_36px_38px_44px]", seps: [4], icons: [
    <><defs><linearGradient id="spectrum"><stop stopColor="#19a7e0" /><stop offset=".45" stopColor="#fff4b0" /><stop offset=".7" stopColor="#fdb92e" /><stop offset="1" stopColor="#e8452a" /></linearGradient></defs><rect x="1" y="2" width="28" height="26" fill="url(#spectrum)" stroke="#777" /></>,
    dots([[4, 5], [15, 5], [26, 5], [4, 15], [15, 15], [26, 15], [4, 25], [15, 25], [26, 25]], 2.500, "#111"),
    <><Scale /><rect x="2" y="15" width="6" height="7" fill="#19a7e0" stroke="none" /><rect x="2" y="22" width="6" height="6" fill="#0a70b5" stroke="none" /><text x="10" y="28" fontSize="24" fontWeight="bold" fontFamily="Liberation Serif, serif" fill="#eee" stroke="#555">P</text></>,
    <><rect x="1" y="1" width="28" height="28" fill="#bbb" stroke="#777" /><rect x="2" y="2" width="15" height="4" fill="#3a5ba0" stroke="none" /><path d="M3 13h16l2 14H6z" fill="#ffe62e" stroke="#19a7e0" strokeWidth="3" /><path d="M10 13h6l-3 7z" fill="#f70" stroke="none" /><rect x="21" y="5" width="6" height="20" fill="#eee" stroke="#777" /></>,
    <><rect x="1" y="1" width="28" height="28" fill="#e5e5e5" stroke="#f03030" strokeDasharray="2.500 1.500" /><path d="M3 9h5l2-3h9l2 3h6v16H3z" fill="#fff" stroke="#ddd" /><circle cx="15" cy="16" r="6" fill="#1b93bd" stroke="none" /><circle cx="15" cy="16" r="4" fill="#111" /></>,
    <><rect x="1" y="1" width="28" height="28" rx="3" fill="#b9b9b9" strokeWidth="2" /><rect x="9" y="4" width="12" height="22" fill="#111" /><rect x="10.500" y="5.500" width="9" height="9" fill="#ddd" /></>,
    <><rect x="1" y="1" width="28" height="28" fill="#fff" stroke="#555" /><circle cx="10" cy="10" r="4.500" fill="#b01030" /><path d="M2 27V23l6-4 4 3 8-9 8 8v6z" fill="#bcbcbc" stroke="none" /></>,
    <><HeatMap /><path d="M4 10h18l1 4h-8v10M8 14v5h6" strokeWidth="2" /></>,
    swatches.map((c, i) => <rect key={c} x={1 + (i % 4) * 7} y={1 + Math.floor(i / 4) * 7} width="7" height="7" fill={c} stroke="#fff" strokeWidth=".5" />),
    <><Scale /><text x="3" y="28" fontSize="20" fontWeight="bold" fontFamily="Liberation Serif, serif" fill="#eee" stroke="#555">2D</text></>,
  ] },
  { title: "5 ::...", grid: "grid-cols-1", seps: [], icons: [
    <Bug fill="#ee1c25" />,
    <Bug fill="#ccc" inner={<><path d="M5 14l5 3 5-3 5 3 5-3q0 11-10 11T5 14z" fill="#e03038" stroke="none" /><path d="M15 15l-5-8M15 15l6-7M15 15v9" stroke="#eee" /></>} />,
  ] },
];

const ghTabs = ["Prm", "Math", "Set", "Vec", "Crv", "Srf", ..."MXTDPRLPDMHEIKSSMHES"];

const Can = ({ a, b, rim, hole }) => (
  <g transform="rotate(38 14 14)">
    <path d="M6 7v15q0 4 8 4t8-4V7z" fill={a} stroke={rim} />
    <ellipse cx="14" cy="7" rx="8" ry="4.500" fill={b} stroke={rim} />
    <ellipse cx="14" cy="7" rx="4.500" ry="2.300" fill={hole} stroke={rim} />
  </g>
);
const Caret = () => <Svg size="size-2" box="0 0 8 8"><path d="M0 2h8l-4 4z" fill="#111" stroke="none" /></Svg>;
const Sep = () => <span className="h-[27px] w-px bg-[#b5b5b5]" />;

const Ports = ({ items, side, pad }) => (
  <ul className={`flex h-full flex-col justify-between ${pad} ${side === "in" ? "items-end" : "items-start"}`}>
    {items.map((t) => <li key={t} className="whitespace-nowrap leading-[8px]">{t}</li>)}
  </ul>
);
const Dots = ({ n, side, pad }) => (
  <div className={`absolute inset-y-0 flex flex-col justify-between ${pad} ${side === "in" ? "-left-1" : "-right-1"}`}>
    {Array.from({ length: n }, (_, i) => (
      <span key={i} className="my-px block size-1.5 rounded-full border-2 border-black bg-white" />
    ))}
  </div>
);

const Component = ({ title, pos, cols, ins, outs, padIn, padOut, icon }) => (
  <article className={`absolute ${pos}`}>
    <h3 className="absolute -top-[14px] w-full whitespace-nowrap text-center text-[10px] italic leading-3 text-[#333]">{title}</h3>
    <Dots n={ins.length} side="in" pad={padIn} />
    <Dots n={outs.length} side="out" pad={padOut} />
    <div className={`relative grid h-full items-center rounded-[3px] border border-[#444] bg-linear-to-b from-[#e9e9e9] to-[#c6c6c6] text-[8px] text-[#222] ${cols}`}>
      <Ports items={ins} side="in" pad={padIn} />
      <Svg size="ml-1 size-[18px]" box="0 0 30 30">{icon}</Svg>
      <Ports items={outs} side="out" pad={padOut} />
    </div>
  </article>
);

const Slider = ({ pos, value, at, label }) => (
  <label className={`absolute flex h-4 w-[156px] rounded-[2px] border border-[#333] text-[8px] leading-[14px] text-[#222] ${pos}`}>
    <span className="w-[63px] whitespace-nowrap border-r border-[#333] bg-linear-to-b from-[#a9a8b8] to-[#8b899c] text-center">Number Slider</span>
    <span className="relative flex-1 bg-linear-to-b from-[#ececec] to-[#cfcfcf]">
      <svg viewBox="0 0 92 14" className="h-3.5 w-full" fill="none" stroke="#bbb" strokeWidth="1">
        <path d="M7 4v4h78V4M15 6v2M23 6v2M31 6v2M39 5v3M47 6v2M55 6v2M63 6v2M71 6v2" />
        <path d={`M${at} 4.500l2.200 2.500-2.200 2.500-2.200-2.500z`} fill="#fff" stroke="#000" strokeWidth="1.400" />
      </svg>
      <span className={`absolute top-0 ${label}`}>{value}</span>
      <input type="range" aria-label="Number Slider" defaultValue={value} className="absolute inset-0 w-full opacity-0" />
    </span>
    <span className="absolute -right-1 top-1 h-1.5 w-1 rounded-r-full border border-l-0 border-black bg-white" />
  </label>
);

const Canvas = () => (
  <div className="relative mx-0.5 min-h-0 flex-1 overflow-hidden bg-[#d4d0c8]">
    <div className="absolute inset-x-0 top-0 h-[93px] border-b border-black bg-[repeating-linear-gradient(45deg,#cbc7be_0_1px,#d4d0c8_1px_3px)]">
      <div className="absolute inset-x-0 bottom-0 h-6 bg-linear-to-b from-transparent to-black/40" />
    </div>
    <svg className="absolute inset-0 h-full w-full" aria-hidden="true">
      <g stroke="#b5b1aa" shapeRendering="crispEdges">
        {tens(0, 20, 1).map((n) => <line key={n} x1={66 + n * 115} x2={66 + n * 115} y1="0" y2="100%" />)}
        {tens(-2, 40, 1).map((n) => n !== 0 && <line key={n} y1={Math.round(92 + n * 38.33)} y2={Math.round(92 + n * 38.33)} x1="0" x2="100%" />)}
      </g>
      <path d="M326 220h110M326 237h110M585 373.500h100" stroke="#4c4c46" strokeWidth="2.500" />
    </svg>
    <Slider pos="left-[168px] top-[212px]" value={29} at={31} label="left-[37px]" />
    <Slider pos="left-[167px] top-[229px]" value={58} at={57} label="left-[40px]" />
    <Component
      title="LB Psychrometric Chart" pos="left-[436px] top-[210px] h-[189px] w-[147px]" cols="grid-cols-[60px_25px_1fr]" padIn="py-[5px]" padOut="py-[5px]"
      ins={["_temperature", "_rel_humidity", "_pressure_", "_base_pt_", "_scale_", "_temp_range_", "plot_wet_bulb_", "legend_par_", "data_", "statement_", "period_"]}
      outs={["out", "title", "temp_lines", "rh_lines", "hr_lines", "enth_wb_lines", "mesh", "legend", "points", "data", "psych_chart", "vis_set"]}
      icon={<Psy mid={<path d="M8 22q9-4 13-15l4 3q-4 11-15 14z" fill="#e87878" stroke="#4a78c8" />} />}
    />
    <Component
      title="LB PMV Polygon" pos="left-[686px] top-[364px] h-[158px] w-[153px]" cols="grid-cols-[54px_25px_1fr]" padIn="py-[4px]" padOut="py-[6px]"
      ins={["_psych_chart", "_mrt_", "_air_speed_", "_met_rate_", "_clothing_", "pmv_par_", "merge_poly_", "strategies_", "strategy_par_", "solar_data_"]}
      outs={["out", "total_comfort", "total_comf_data", "polygon_names", "polygon_comfort", "polygon_data", "comfort_poly", "strategy_poly"]}
      icon={<Psy mid={<path d="M13 17l5-5 7 15-6 1z" fill="#ee1c25" />} />}
    />
    <div className="absolute bottom-0 left-0 flex h-[35px] w-[149px] items-center border-y border-r border-black bg-linear-to-b from-[#eee] to-[#999]">
      {[
        <><path d="M9 2h9v12H6v6H2V9h12V7H9z" fill="#3f74d8" stroke="#1c3f8a" /><path d="M16 14h8V8h3v12H16v7H9v-9h3z" fill="#ffa51f" stroke="#9a5b00" /></>,
        <><rect x="2" y="2" width="24" height="24" rx="2" fill="#ffca1f" stroke="#c08a00" /><path d="M4 20l4-7v8l5-11v9l5-12v11q4-2 5-11" stroke="#a65a00" strokeWidth="2" /></>,
        <><rect x="2" y="2" width="24" height="24" rx="2" fill="#b5b5b5" stroke="#222" /><rect x="9" y="4" width="10" height="20" fill="#111" /><rect x="10" y="5" width="8" height="8" fill="#ddd" /></>,
        <><rect x="2" y="2" width="24" height="24" rx="2" fill="#c5c5c5" stroke="#555" /><path d="M14 6v7" strokeWidth="2.500" /><path d="M10 12h8l-4 5z" fill="#111" /><path d="M4 19.500h20" strokeWidth="1.500" /><path d="M5 22h18" strokeWidth="3" strokeDasharray="1.500 1.500" /></>,
      ].map((ic, i) => <button key={i} aria-label={`Widget ${i + 1}`} className="flex w-[35px] justify-center"><Svg size="size-[25px]">{ic}</Svg></button>)}
      <span className="ml-auto h-full w-[7px] bg-linear-to-b from-[#999] to-[#666]" />
    </div>
    <div className="absolute bottom-1.5 right-2">
      <svg viewBox="0 0 66 60" className="h-[60px] w-[66px]" aria-hidden="true">
        <defs><radialGradient id="dial"><stop stopColor="#f4f4f4" /><stop offset="1" stopColor="#bdbdbd" /></radialGradient></defs>
        <path d="M3 11l8-3 3 8-8 3zM14 12l9-8 5 5-11 12z" fill="#000" />
        <circle cx="38" cy="30" r="25" fill="url(#dial)" stroke="#555" strokeWidth="2" />
        <circle cx="38" cy="30" r="23.500" fill="none" stroke="#fff" strokeWidth="2" />
        <path d="M46 8l1 8 6-4zM17 21l8-1-5-6zM59 38l-7 2 5 6zM30 51l-1-8-6 4z" fill="#fff" />
      </svg>
    </div>
  </div>
);

const GrasshopperWindow = () => (
  <section className="flex min-w-0 flex-col overflow-hidden border border-b-2 border-[#6f6f73] bg-[#f0f0f0] text-[#111]">
    <header className="flex h-9 shrink-0 items-center bg-[#f3f3f3] pl-2.5">
      <h1 className="flex-1">Grasshopper - unnamed</h1>
      <WindowButtons color="text-black" />
    </header>
    <nav className="flex h-[35px] shrink-0 items-center gap-[22px] bg-linear-to-r from-[#f0f0f0] to-white pl-[15px] pr-2.5 pt-0.5">
      {["File", "Edit", "View", "Display", "Solution", "Help", "MetaHopper", "Speckle 2"].map((m) => <button key={m}>{m}</button>)}
      <span className="ml-auto">unnamed</span>
    </nav>
    <div className="grid h-[29px] shrink-0 grid-cols-[36px_58px_32px_50px_36px_39px_repeat(20,35px)] pl-1 text-center font-['Liberation_Sans',sans-serif] text-[#777]">
      {ghTabs.map((t, i) => (
        <button key={i} className={i === 12 ? "relative -mb-px rounded-t-lg border border-b-0 border-[#888] bg-linear-to-b from-white to-[#e4e4e4] pb-1 text-black" : ""}>{t}</button>
      ))}
    </div>
    <div className="shrink-0 rounded-tr-xl border-t border-[#999] bg-linear-to-b from-[#cfcfcf] to-[#f0f0f0] pb-[13px] pl-1 pr-3">
      <div className="flex gap-[5px] overflow-hidden pt-px">
        {ribbon.map((g) => {
          const n = g.icons.length / 2;
          return (
            <div key={g.title} className={`flex flex-col overflow-hidden rounded-md border border-[#777] bg-linear-to-b from-[#d2d2d2] to-[#f4f4f4] ${n === 1 ? "flex-1" : ""}`}>
              <div className={`-mx-px grid h-[71px] content-start justify-items-center gap-y-[5px] pt-[3px] ${g.grid}`}>
                {g.icons.map((ic, i) => (
                  <button key={i} aria-label={`${g.title} ${i + 1}`} className={`flex w-full justify-center ${g.seps.includes(i % n) ? "border-l border-[#bbb]" : ""}`}>
                    <Svg size="size-[30px]" box="0 0 30 30">{ic}</Svg>
                  </button>
                ))}
              </div>
              <div className="flex h-[18px] items-center justify-center bg-linear-to-b from-[#333] to-[#151515] font-['Liberation_Sans',sans-serif] text-[14px] text-white">
                <span className="flex-1 whitespace-nowrap text-center">{n === 1 ? <span className="text-[12px]">{g.title}</span> : g.title}</span>
                {n > 1 && <span className="mr-1"><Svg size="size-2.5" box="0 0 10 10"><path d="M5 0v8M1 4l4 4 4-4" stroke="#999" strokeWidth="2" /></Svg></span>}
              </div>
            </div>
          );
        })}
      </div>
    </div>
    <div className="mx-0.5 flex h-[39px] shrink-0 items-center border-l border-t border-[#777] bg-linear-to-b from-white to-[#ececec]">
      <button aria-label="Open" className="w-[34px] pl-0.5"><Svg><path d="M5 2h11l5 5v13H5z" fill="#eee" stroke="#777" /><path d="M2 12h7l3-3h12v17H2z" fill="#6cc24a" stroke="#3c8a22" /></Svg></button>
      <button aria-label="Save" className="mr-1 flex w-9 justify-center"><Svg><path d="M1 1h23l3 3v23H1z" fill="#1765e0" stroke="#0b3f9e" /><rect x="5" y="2" width="18" height="12" fill="#e8eef8" stroke="none" /><path d="M7 6h14M7 10h14" stroke="#9bb" /><rect x="8" y="18" width="13" height="9" fill="#bbb" stroke="#0b3f9e" /><rect x="10" y="20" width="4" height="6" fill="#1765e0" stroke="none" /></Svg></button>
      <Sep />
      <span className="relative ml-1 mr-1.5">
        <select aria-label="Zoom" defaultValue="77%" className="h-7 w-[180px] appearance-none border border-[#888] bg-white pl-[3px]"><option>77%</option></select>
        <svg viewBox="0 0 10 10" className="pointer-events-none absolute right-1.5 top-[9px] size-2.5" fill="none" stroke="#555"><path d="M0 3l5 5 5-5" /></svg>
      </span>
      <button aria-label="Zoom extents"><Svg><path d="M2 10V2h8M18 2h8v8M26 18v8h-8M10 26H2v-8" strokeWidth="4.500" /><path d="M11 11l6 6M17 11l-6 6" strokeWidth="2" /></Svg></button>
      <span className="mx-2"><Caret /></span>
      <button aria-label="Named views"><Svg><path d="M1 14q13-16 26 0-13 14-26 0z" fill="#fff" strokeWidth="1.800" stroke="#445" /><circle cx="14" cy="14" r="7.500" fill="#49aee0" stroke="#357" /><circle cx="14" cy="14" r="3" fill="#111" /><circle cx="16.500" cy="11.500" r="1.500" fill="#fff" stroke="none" /></Svg></button>
      <span className="mx-1.5"><Caret /></span>
      <button aria-label="Sketch"><Svg><path d="M2 10q5-4 5 0-5 12-1 15 4 2 9-2" stroke="#5a1c10" strokeWidth="2" /><path d="M25 2l2 9-10 11-6 1 2-9z" fill="#d8232a" stroke="#8a1010" strokeWidth=".8" /><path d="M25 2l-12 12 2 2z" fill="#f6817f" stroke="none" /><path d="M13 15l5 6-7 2z" fill="#ffce6a" stroke="#8a5510" strokeWidth=".8" /></Svg></button>
      <span className="ml-auto flex items-center">
        <button aria-label="No preview" className="flex w-[35px] justify-center"><Svg><path d="M9 3q6-4 11 0l2 4-3 9H9L6 7z" fill="#ddd" stroke="#999" /><ellipse cx="15" cy="6" rx="5" ry="3" fill="#f4f4f4" stroke="#999" /><path d="M3 20q11-11 22 0l-3 5q-8 4-16 0z" fill="#333" stroke="#555" /></Svg></button>
        <button aria-label="Wireframe preview" className="flex w-[35px] justify-center"><Svg><Can a="#f3f3f3" b="#fff" rim="#555" hole="#fff" /><g transform="rotate(38 14 14)"><ellipse cx="14" cy="21.500" rx="8" ry="4.500" stroke="#555" /></g></Svg></button>
        <button aria-label="Shaded preview" className="flex h-[34px] w-[34px] items-center justify-center border border-[#0078d7]"><Svg><Can a="#c4161c" b="#d8373b" rim="#6a0a0c" hole="#7a0a0e" /></Svg></button>
        <span className="ml-2 mr-1.5"><Sep /></span>
        <button aria-label="Selected preview" className="flex w-[35px] justify-center"><Svg><Can a="#5cae22" b="#84cf4a" rim="#2f6d0c" hole="#2f6d0c" /><path d="M4 10l18 16q-8 3-15-3-5-5-3-13z" fill="#ddd" stroke="#777" /><path d="M2 5l22 21" strokeWidth="1.800" /></Svg></button>
        <button aria-label="Document preview" className="flex w-[35px] justify-center"><Svg><circle cx="14" cy="14" r="12" fill="#e2e2e2" stroke="#777" /><path d="M14 2a12 12 0 0 0 0 24z" fill="#e88a1c" stroke="#8a3c00" /></Svg></button>
        <span className="mx-1"><Sep /></span>
        <button aria-label="Preview mesh quality" className="flex w-7 justify-center"><Svg size="size-[26px]"><path d="M9 3l11 0 6 8-2 10-9 5-9-4-4-10z" fill="#6fb2f0" stroke="#234a8a" strokeWidth="2" /><path d="M9 6l8-1 5 5-9 3z" fill="#b8defc" stroke="none" /></Svg></button>
        <span className="ml-1 mr-[3px]"><Caret /></span>
      </span>
    </div>
    <Canvas />
    <footer className="mt-0.5 flex h-6 shrink-0 items-center border-t border-[#ccc] pl-1">
      <Svg size="size-5"><circle cx="14" cy="14" r="12" fill="#1b78c8" stroke="#0a2f7a" strokeWidth="3" /><path d="M14 6v10M14 19v4" stroke="#fff" strokeWidth="4" /></Svg>
      <span className="flex-1 pl-[5px]">Autosave complete (200 seconds ago)</span>
      <span className="text-[#777]">1.0.0007</span>
      <Svg size="ml-6 mr-1 mt-2 size-3" box="0 0 12 12"><path d="M9 1.500h2M5 5.500h2M9 5.500h2M1 9.500h2M5 9.500h2M9 9.500h2" stroke="#aaa" strokeWidth="2" /></Svg>
    </footer>
  </section>
);

/* ---------- taskbar ---------- */

const Edge = ({ badge }) => (
  <>
    <defs>
      <linearGradient id="edgeTop" x1="0" y1=".4" x2="1" y2=".3"><stop stopColor="#1f9fe0" /><stop offset=".55" stopColor="#35c1c8" /><stop offset="1" stopColor="#63e05a" /></linearGradient>
      <linearGradient id="edgeLow" x1="0" y1="0" x2="0" y2="1"><stop stopColor="#1b8fe0" /><stop offset="1" stopColor="#0c4f9c" /></linearGradient>
    </defs>
    <g stroke="none">
      <path d="M1 16C1 7 8 1 16 1c9 0 15 6 15 13 0 5-4 8-8 8-3 0-5-1-5-2s2-2 2-5c0-4-4-6-8-6-6 0-11 4-11 7z" fill="url(#edgeTop)" />
      <path d="M1 16c0-4 5-7 11-7 3 0 5 1 7 3-4-1-8 2-8 7 0 6 5 9 10 9 3 0 5-1 7-2-3 4-8 5-12 5C8 31 1 25 1 16z" fill="url(#edgeLow)" />
    </g>
    {badge}
  </>
);
const apps = [
  ["Start", <g fill="#4cc2f7" stroke="none"><path d="M1 1h14.300v14.300H1zM16.700 1H31v14.300H16.700zM1 16.700h14.300V31H1zM16.700 16.700H31V31H16.700z" /></g>],
  ["Search", <g stroke="#e5e5e5"><circle cx="14" cy="14" r="11" strokeWidth="3" fill="#3a3a3a" /><path d="M22 22l8 8" strokeWidth="3.500" /></g>],
  ["Task view", <g stroke="none"><rect x="9" y="1" width="22" height="20" rx="2" fill="#f1f1f1" /><rect x="1" y="9" width="22" height="20" rx="2" fill="#777" opacity=".9" /></g>],
  ["File Explorer", <g stroke="none"><path d="M1 3h11l4 4h15v23H1z" fill="#e5a100" /><path d="M1 9h30v21H1z" fill="#ffcf48" /><path d="M6 30v-5q0-3 3-3h14q3 0 3 3v5z" fill="#0f6cbd" /></g>, 1],
  ["Sticky Notes", <g stroke="none"><path d="M4 2h23q2 0 2 2v24q0 2-2 2H4q-2 0-2-2V4q0-2 2-2z" fill="#ffd60a" /><path d="M29 17H19q-2 0-2 2v11z" fill="#444" /><path d="M29 17v11q0 2-2 2H17z" fill="#e8a800" /></g>],
  ["Edge", <Edge badge={<g stroke="none"><circle cx="8" cy="24" r="7" fill="#111" /><path d="M4 20l6-3 3 7-5 2z" fill="#e8e4d8" /></g>} />, 1],
  ["Edge work", <Edge badge={<g stroke="none"><circle cx="9" cy="24" r="8" fill="#5a4a4a" /><circle cx="9" cy="21" r="3.500" fill="#ddb9a0" /></g>} />],
  ["Edge personal", <Edge badge={<g stroke="none"><circle cx="9" cy="24" r="8" fill="#cfc8c0" /><circle cx="9" cy="21" r="3" fill="#8a8078" /><path d="M3 29q6-7 12 0z" fill="#8a8078" /></g>} />, 1],
  ["Terminal", <g><rect x="1" y="3" width="30" height="26" rx="2" fill="#444" stroke="none" /><rect x="1" y="3" width="30" height="4" fill="#999" stroke="none" /><path d="M6 12l6 5-6 5" stroke="#fff" strokeWidth="2.500" /><path d="M15 23h9" stroke="#fff" strokeWidth="2.500" /></g>],
  ["VS Code", <g stroke="none"><path d="M22 1l9 4v22l-9 4z" fill="#1f9cf0" /><path d="M22 1v9L4 25l-3-3z" fill="#0065a9" /><path d="M1 10l3-3 18 16v8z" fill="#007acc" /></g>, 1],
  ["Outlook", <g stroke="none"><path d="M3 13L18 2l12 9v18H3z" fill="#1490df" /><path d="M7 10l11-8 12 9-12 4z" fill="#2a6fc8" /><path d="M12 14l18-3v14H12z" fill="#50b9ff" /><rect x="1" y="10" width="15" height="15" rx="2" fill="#0f5fb5" /><circle cx="8.500" cy="17.500" r="4" fill="none" stroke="#fff" strokeWidth="2" /><rect x="10" y="23" width="22" height="9" rx="2" fill="#28e0d8" /><text x="11.500" y="30" fontSize="7.500" fontWeight="bold" fill="#06313a" fontFamily="Liberation Sans, sans-serif">NEW</text></g>],
];

const Cloud = ({ a, b }) => <Svg size="size-5" box="0 0 20 20"><path d="M4 16a4 4 0 0 1 0-8q2-5 7-4 4 1 5 5a4 4 0 0 1 0 7z" fill={a} stroke="none" /><path d="M3 16l9-6 7 3q-1 3-3 3z" fill={b} stroke="none" /></Svg>;

const Taskbar = () => (
  <footer className="flex h-[60px] shrink-0 items-center bg-[#1c1c1c] pl-[630px] pr-6 font-['Open_Sans',sans-serif] text-white">
    {apps.map(([name, icon, dot]) => (
      <button key={name} aria-label={name} className="relative flex h-[60px] w-[55px] items-center justify-center">
        <Svg size="size-[30px]" box="0 0 32 32">{icon}</Svg>
        {dot && <span className="absolute bottom-1.5 h-1 w-[7px] rounded-full bg-[#999]" />}
      </button>
    ))}
    <button aria-label="Rhino" className="relative ml-1 flex h-[50px] w-12 items-center justify-center rounded border border-[#333] bg-[#2b2b2b]">
      <RhinoLogo size="size-[30px]" />
      <span className="absolute bottom-px h-1 w-5 rounded-full bg-[#4cc2ff]" />
    </button>
    <div className="ml-auto flex items-center">
      <Svg size="mr-6 size-3" box="0 0 12 12"><path d="M1 9l5-6 5 6" stroke="#fff" strokeWidth="1.600" /></Svg>
      <div className="flex gap-5"><Cloud a="#cfcfcf" b="#fff" /><Cloud a="#0a64c4" b="#28a8ea" /><Cloud a="#0a64c4" b="#28a8ea" /></div>
      <div className="w-[74px] text-center leading-5">POR<br />PTB2</div>
      <div className="flex items-center gap-2.5">
        <Svg size="size-5" box="0 0 20 20"><path d="M1 8q9-8 18 0M4 11q6-5 12 0" stroke="#777" strokeWidth="1.600" /><path d="M7 14q3-2 6 0" stroke="#fff" strokeWidth="1.800" /><circle cx="10" cy="17" r="1.500" fill="#fff" stroke="none" /></Svg>
        <Svg size="size-5" box="0 0 20 20"><path d="M1 7.500h4l4-4v13l-4-4H1zM12 7q2 3 0 6M14.500 5q3.500 5 0 10M17 3q4.500 7 0 14" stroke="#fff" strokeWidth="1.400" /></Svg>
        <Svg size="size-5" box="0 0 20 20"><rect x="3" y="6" width="14" height="10" rx="2" stroke="#fff" strokeWidth="1.400" /><path d="M18.500 9.500v3" stroke="#fff" strokeWidth="1.400" /><path d="M5 1L2 8h3l-1 5 5-7H6l2-5z" stroke="#1c1c1c" fill="#fff" strokeWidth=".8" /></Svg>
      </div>
      <div className="w-[99px] text-right leading-[19px]">15:53<br />06/06/2024</div>
      <Svg size="ml-2.5 size-5" box="0 0 20 20"><path d="M3 15V9q0-6 6-6 7 0 7 6v6l1 1H2z" fill="#fff" stroke="none" /><path d="M7 18h5" stroke="#fff" strokeWidth="2" /><path d="M7 7h4l-4 5h4" stroke="#1c1c1c" strokeWidth="1.400" /><path d="M14 1h4l-4 4h4" stroke="#fff" /></Svg>
    </div>
  </footer>
);

export default function App() {
  return (
    <div className="flex h-screen flex-col overflow-hidden font-['Noto_Sans','Open_Sans',sans-serif] text-[14px] leading-5 text-[#111]">
      <main className="grid min-h-0 flex-1 grid-cols-2">
        <RhinoWindow />
        <GrasshopperWindow />
      </main>
      <Taskbar />
    </div>
  );
}
